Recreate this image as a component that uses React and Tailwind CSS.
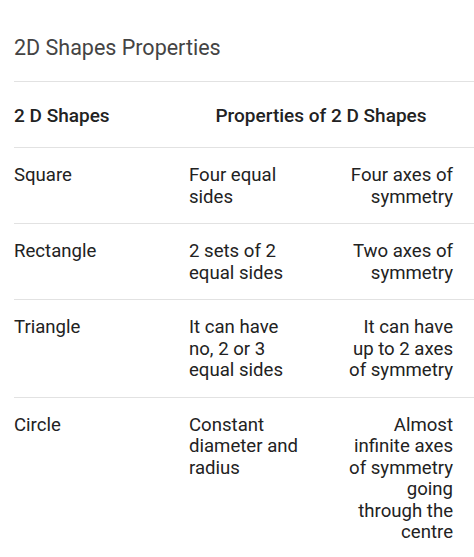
const rows = [
  { shape: "Square", sides: "Four equal sides", axes: "Four axes of symmetry" },
  { shape: "Rectangle", sides: "2 sets of 2 equal sides", axes: "Two axes of symmetry" },
  { shape: "Triangle", sides: "It can have no, 2 or 3 equal sides", axes: "It can have up to 2 axes of symmetry" },
  {
    shape: "Circle",
    sides: "Constant diameter and radius",
    axes: "Almost infinite axes of symmetry going through the centre",
  },
];

export default function App() {
  return (
    <div
      className="min-h-screen bg-white pl-[14px] text-[#222]"
      style={{ fontFamily: "Roboto, 'Liberation Sans', sans-serif" }}
    >
      <h1 className="border-b border-[#e2e2e2] pt-[36px] pb-[21px] text-[21.5px] leading-6 font-normal text-[#444]">
        2D Shapes Properties
      </h1>

      <div className="grid grid-cols-[175px_1fr] border-b border-[#e2e2e2] pt-[23px] pb-[20px] text-[19px] leading-[22px] font-medium">
        <div>2 D Shapes</div>
        <div className="pr-[21px] text-center">Properties of 2 D Shapes</div>
      </div>

      {rows.map((row) => (
        <div
          key={row.shape}
          className="grid grid-cols-[175px_112px_1fr] border-b border-[#e2e2e2] pt-[17px] pb-[15px] pr-[21px] text-[18.6px] leading-[21.5px] last:border-b-0"
        >
          <div>{row.shape}</div>
          <div>{row.sides}</div>
          <div className="ml-auto max-w-[112px] text-right">{row.axes}</div>
        </div>
      ))}
    </div>
  );
}
